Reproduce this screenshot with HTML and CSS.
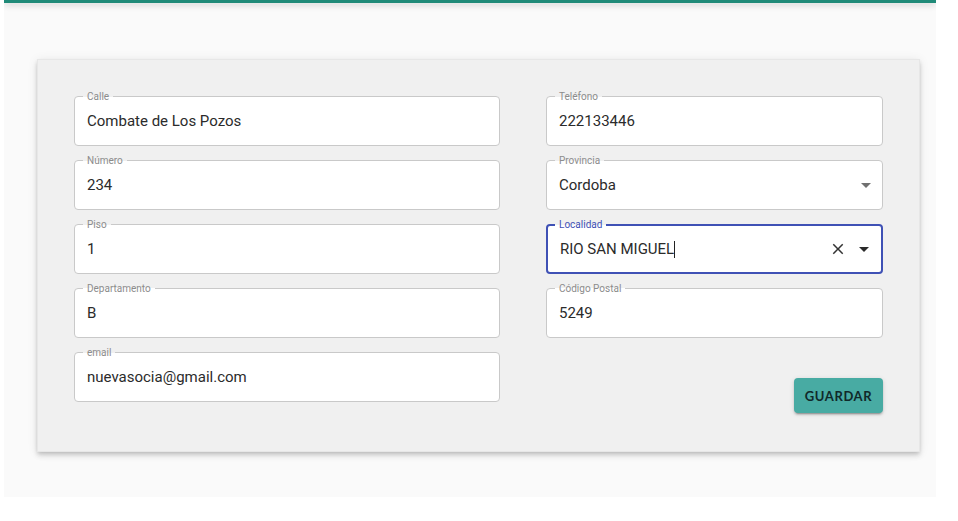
FILE: index.html
```html
<!DOCTYPE html>
<html lang="es">
<head>
<meta charset="utf-8">
<title>Domicilio</title>
<link rel="stylesheet" href="styles.css">
</head>
<body>
<div class="page">
  <div class="topbar"></div>
  <div class="card">
    <div class="form">
      <div class="field"><span class="label">Calle</span><span class="value">Combate de Los Pozos</span></div>
      <div class="field"><span class="label">Teléfono</span><span class="value">222133446</span></div>
      <div class="field"><span class="label">Número</span><span class="value">234</span></div>
      <div class="field"><span class="label">Provincia</span><span class="value">Cordoba</span>
        <svg class="icon arrow" viewBox="0 0 24 24" width="24" height="24"><path d="M7 10l5 5 5-5z"/></svg>
      </div>
      <div class="field"><span class="label">Piso</span><span class="value">1</span></div>
      <div class="field focused"><span class="label">Localidad</span><span class="value">RIO SAN MIGUEL<span class="caret"></span></span>
        <svg class="icon close" viewBox="0 0 24 24" width="18" height="18"><path d="M19 6.41L17.59 5 12 10.59 6.41 5 5 6.41 10.59 12 5 17.59 6.41 19 12 13.41 17.59 19 19 17.59 13.41 12z"/></svg>
        <svg class="icon arrow dark" viewBox="0 0 24 24" width="24" height="24"><path d="M7 10l5 5 5-5z"/></svg>
      </div>
      <div class="field"><span class="label">Departamento</span><span class="value">B</span></div>
      <div class="field"><span class="label">Código Postal</span><span class="value">5249</span></div>
      <div class="field"><span class="label">email</span><span class="value">nuevasocia@gmail.com</span></div>
      <div class="actions"><button class="btn" type="button">GUARDAR</button></div>
    </div>
  </div>
</div>
</body>
</html>
```
FILE: styles.css
```css
html, body {
  margin: 0;
  padding: 0;
  background: #ffffff;
}
body {
  font-family: Roboto, "Liberation Sans", Arial, sans-serif;
}
.page {
  margin-left: 4px;
  width: 932px;
  height: 497px;
  background: #fafafa;
  overflow: hidden;
}
.topbar {
  height: 3px;
  background: #1f8a78;
  box-shadow: 0 2px 6px rgba(0, 0, 0, 0.22);
}
.card {
  margin: 56px 0 0 33px;
  width: 883px;
  box-sizing: border-box;
  padding: 37px 37px 38px 37px;
  background: #f0f0f0;
  border: 1px solid #e7e7e7;
  box-shadow: 0 2px 4px -1px rgba(0, 0, 0, 0.16), 0 4px 5px 0 rgba(0, 0, 0, 0.10), 0 1px 10px 0 rgba(0, 0, 0, 0.08);
}
.form {
  display: grid;
  grid-template-columns: 426px 337px;
  column-gap: 46px;
  row-gap: 14px;
  margin-left: -1px;
  margin-top: -1px;
}
.field {
  position: relative;
  height: 50px;
  box-sizing: border-box;
  border: 1px solid #c9c9c9;
  border-radius: 4px;
  background: #ffffff;
  display: flex;
  align-items: center;
  padding: 0 4px 0 12px;
}
.label {
  position: absolute;
  top: -6px;
  left: 8px;
  padding: 0 4px;
  font-size: 10px;
  line-height: 11px;
  color: #8c8c8c;
  background: linear-gradient(#f0f0f0 50%, #ffffff 50%);
}
.value {
  flex: 1;
  font-size: 15px;
  color: #2b2b2b;
  white-space: nowrap;
  display: flex;
  align-items: center;
}
.caret {
  display: inline-block;
  width: 1px;
  height: 17px;
  background: #222;
  margin-left: 0;
}
.icon {
  flex: none;
  fill: #707070;
}
.icon.dark {
  fill: #2a2a2a;
}
.icon.close {
  fill: #333333;
  margin-right: 5px;
}
.field.focused {
  border: 2px solid #3f51b5;
  padding: 0 5px 0 12px;
}
.field.focused .label {
  top: -7px;
  left: 7px;
  color: #3f51b5;
}
.actions {
  display: flex;
  justify-content: flex-end;
  align-items: flex-start;
  padding-top: 26px;
}
.btn {
  width: 89px;
  height: 35px;
  border: none;
  border-radius: 4px;
  background: #48aba3;
  color: #10292a;
  font-family: Lato, "Open Sans", sans-serif;
  font-size: 13px;
  font-weight: 700;
  letter-spacing: 0.6px;
  box-shadow: 0 3px 1px -2px rgba(0, 0, 0, 0.2), 0 2px 2px 0 rgba(0, 0, 0, 0.14), 0 1px 5px 0 rgba(0, 0, 0, 0.12);
  cursor: pointer;
}
```
